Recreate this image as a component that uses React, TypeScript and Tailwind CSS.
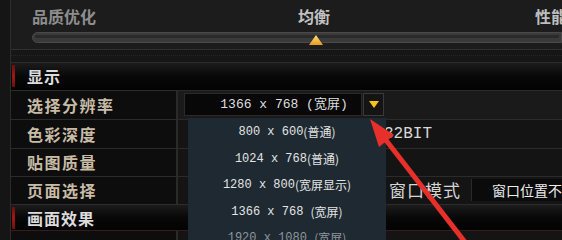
import React from "react";

const rows = [
  { label: "选择分辨率", h: "h-[29px]" },
  { label: "色彩深度", h: "h-[29px]" },
  { label: "贴图质量", h: "h-[28px]" },
  { label: "页面选择", h: "h-[28px]" },
];

const options = [
  { text: "800 x 600", cn: "(普通)", dim: false },
  { text: "1024 x 768", cn: "(普通)", dim: false },
  { text: "1280 x 800", cn: "(宽屏显示)", dim: false },
  { text: "1366 x 768 ", cn: "(宽屏)", dim: false },
  { text: "1920 x 1080 ", cn: "(宽屏)", dim: true },
];

function SectionHeader({ title, h }: { title: string; h: string }) {
  return (
    <div
      className={`flex ${h} items-center border-t border-[#2c2c2c] bg-gradient-to-b from-[#1c1c1c] via-[#080808] to-[#030303]`}
    >
      <div className="ml-px h-[22px] w-[3px] bg-gradient-to-b from-[#6e0e0e] via-[#a01818] to-[#6e0e0e]" />
      <span className="ml-[12px] text-[16px] font-bold tracking-[1px] text-[#dcdcdc]">{title}</span>
    </div>
  );
}

export default function App() {
  return (
    <div className="relative h-[240px] w-[562px] overflow-hidden bg-[#131313] font-['Noto_Sans_CJK_SC',sans-serif]">
      <div className="flex h-full">
        {/* left frame */}
        <div className="w-[11px] shrink-0 border-r border-[#2c2c2c] bg-[#151515]" />

        <div className="flex min-w-0 flex-1 flex-col">
          {/* quality slider panel */}
          <div className="h-[50px] shrink-0 border-b border-[#303030] bg-[#1c1c1c]">
            <div className="flex pl-[21px] pt-[6px] text-[16px] font-bold leading-[20px]">
              <span className="w-[266px] shrink-0 text-[#8e8e8e]">品质优化</span>
              <span className="w-[237px] shrink-0 text-[#c2c2c2]">均衡</span>
              <span className="shrink-0 whitespace-nowrap text-[#bdbdbd]">性能</span>
            </div>
            <div className="relative ml-[21px] mt-[6px] h-[11px] rounded-l-[6px] border border-[#4a4a4a] bg-[#3a3a3a]">
              <div className="mx-[2px] mt-[2px] h-[3px] rounded-l-full bg-[#2a2a2a]" />
              <svg className="absolute left-[276px] top-[2px]" width="14" height="10" viewBox="0 0 14 10">
                <defs>
                  <linearGradient id="mk" x1="0" y1="0" x2="0" y2="1">
                    <stop offset="0" stopColor="#ffe27a" />
                    <stop offset="1" stopColor="#e89a1c" />
                  </linearGradient>
                </defs>
                <polygon points="7,0 14,10 0,10" fill="url(#mk)" />
              </svg>
            </div>
          </div>

          {/* gap strip */}
          <div className="h-[12px] shrink-0 bg-[#161616]">
            <div className="mt-[5px] border-t border-dotted border-[#262626]" />
          </div>

          <SectionHeader title="显示" h="h-[29px]" />

          {rows.map((r, i) => (
            <div key={r.label} className={`flex ${r.h} shrink-0 border-t border-[#2b2b2b]`}>
              <div className="flex w-[167px] shrink-0 items-center border-r-2 border-[#2a2a2a] bg-[#0d0d0d] pl-[16px] text-[16px] font-bold tracking-[1.5px] whitespace-nowrap text-[#c8bca6]">
                {r.label}
              </div>
              <div
                className={`relative flex min-w-0 flex-1 items-center ${i === 0 ? "bg-[#1a1a1a]" : "bg-[#141414]"}`}
              >
                {i === 0 && (
                  <div className="ml-[6px] flex items-center">
                    <div className="flex h-[23px] w-[178px] items-center justify-center border border-[#2a2a2a] bg-[#080808] pl-[22px] font-['Liberation_Mono','Noto_Sans_CJK_SC',monospace] text-[13px] whitespace-pre text-[#dedede]">
                      1366 x 768 (宽屏)
                    </div>
                    <div className="ml-px flex h-[23px] w-[21px] items-center justify-center border border-[#3a3a3a] bg-[#141414]">
                      <svg width="10" height="7" viewBox="0 0 10 7">
                        <polygon points="0,0 10,0 5,7" fill="#f6c21c" />
                      </svg>
                    </div>
                  </div>
                )}
                {i === 1 && (
                  <span className="ml-[206px] font-['Liberation_Mono',monospace] text-[16px] text-[#d8d8d8]">
                    32BIT
                  </span>
                )}
                {i === 3 && (
                  <div className="flex h-full shrink-0 items-center">
                    <span className="ml-[211px] shrink-0 whitespace-nowrap text-[17px] tracking-[1px] text-[#d6d6d6]">
                      窗口模式
                    </span>
                    <div className="ml-[10px] flex h-[22px] w-[120px] shrink-0 items-center border-l border-[#2a2a2a] bg-[#0b0b0b] pl-[20px] text-[14px] whitespace-nowrap text-[#ededed]">
                      窗口位置不变
                    </div>
                  </div>
                )}
              </div>
            </div>
          ))}

          <SectionHeader title="画面效果" h="h-[28px]" />
          <div className="flex h-[10px] border-t border-[#3a1a1a]">
            <div className="w-[167px] border-r-2 border-[#2a2a2a] bg-[#0d0d0d]" />
            <div className="flex-1 bg-[#141414]" />
          </div>
        </div>
      </div>

      {/* open resolution list */}
      <div className="absolute left-[188px] top-[118px] flex w-[198px] flex-col bg-[#1e2931] pt-[1px] font-['Liberation_Mono','Noto_Sans_CJK_SC',monospace] text-[12px]">
        {options.map((o) => (
          <div
            key={o.text}
            className={`flex h-[26.5px] items-center justify-center whitespace-pre ${o.dim ? "text-[#8e969c]" : "text-[#e4e4e4]"}`}
          >
            {o.text}
            <span className="font-['Noto_Sans_CJK_SC',sans-serif]">{o.cn}</span>
          </div>
        ))}
      </div>

      {/* red annotation arrow */}
      <svg className="pointer-events-none absolute left-0 top-0" width="562" height="240" viewBox="0 0 562 240">
        <line x1="468" y1="246" x2="382" y2="135" stroke="#e8302a" strokeWidth="5" />
        <polygon points="370,119 394,135 379,147" fill="#e8302a" />
      </svg>
    </div>
  );
}
